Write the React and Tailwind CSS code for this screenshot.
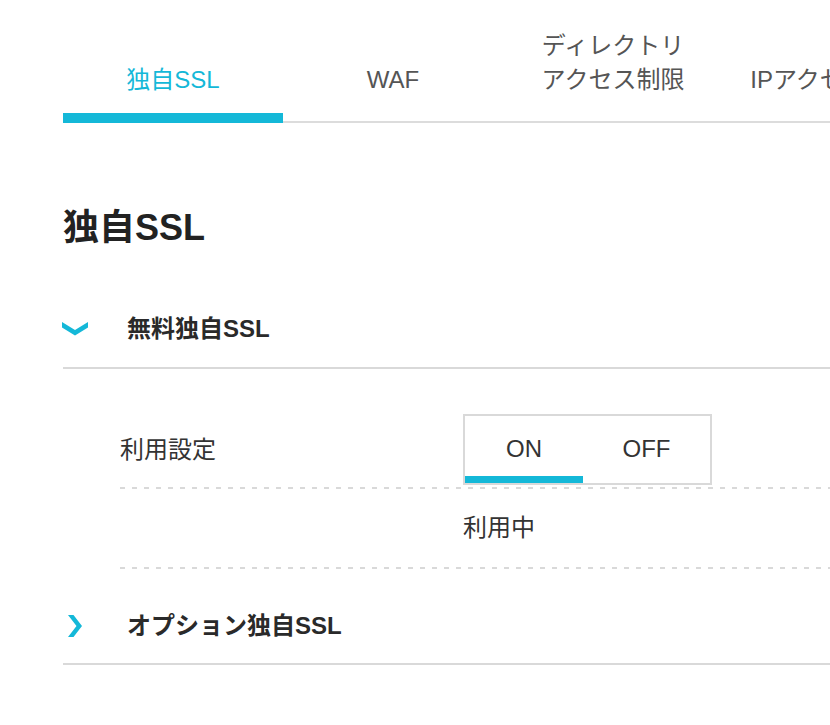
import React, { useState } from "react";

const tabs = [
  { key: "ssl", lines: ["独自SSL"] },
  { key: "waf", lines: ["WAF"] },
  { key: "dir", lines: ["ディレクトリ", "アクセス制限"] },
  { key: "ip", lines: ["IPアクセス制限"] },
];

const ChevronDown = () => (
  <svg width="26" height="14" viewBox="0 0 26 14" className="-ml-px">
    <polygon points="0,0 13,8 26,0 26,5.5 13,13.5 0,5.5" fill="#14b8d8" />
  </svg>
);

const ChevronRight = () => (
  <svg width="14" height="22" viewBox="0 0 14 22" className="ml-[5px]">
    <polygon points="0,0 5.5,0 14,11 5.5,22 0,22 8.5,11" fill="#14b8d8" />
  </svg>
);

const Dotted = () => (
  <div className="h-[2px] bg-[linear-gradient(to_right,#d9d9d9_0px,#d9d9d9_5px,transparent_5px,transparent_12px)] bg-[length:12px_2px] bg-repeat-x" />
);

const App = () => {
  const [activeTab, setActiveTab] = useState("ssl");
  const [freeOpen, setFreeOpen] = useState(true);
  const [optionOpen, setOptionOpen] = useState(false);
  const [sslOn, setSslOn] = useState(true);

  return (
    <div className="w-full min-h-screen overflow-hidden bg-white pl-[63px] pt-[29px] font-['Liberation_Sans','Noto_Sans_CJK_JP',sans-serif]">
      {/* タブ */}
      <div className="flex items-end border-b-2 border-[#dcdcdc]">
        {tabs.map((tab) => (
          <button
            key={tab.key}
            onClick={() => setActiveTab(tab.key)}
            className={
              activeTab === tab.key
                ? "w-[220px] shrink-0 -mb-[2px] pb-4 border-b-[10px] border-[#14b8d8] text-center text-[24px] leading-[34px] text-[#14b8d8]"
                : "w-[220px] shrink-0 -mb-[2px] pb-4 border-b-[10px] border-transparent text-center text-[24px] leading-[34px] text-[#555]"
            }
          >
            {tab.lines.map((l) => (
              <div key={l} className="whitespace-nowrap">{l}</div>
            ))}
          </button>
        ))}
      </div>

      <h2 className="mt-[80px] text-[36px] leading-[50px] font-bold text-[#222]">独自SSL</h2>

      {/* 無料独自SSL */}
      <button
        onClick={() => setFreeOpen(!freeOpen)}
        className="mt-[37px] w-full h-[79px] flex items-center border-b-2 border-[#d9d9d9] text-left"
      >
        <div className="w-[64px] flex items-center">
          {freeOpen ? <ChevronDown /> : <ChevronRight />}
        </div>
        <span className="text-[24px] font-bold text-[#2a2a2a]">無料独自SSL</span>
      </button>

      {freeOpen && (
        <div className="ml-[57px]">
          <div className="flex items-center pt-[45px] pb-[2px]">
            <div className="w-[343px] text-[24px] leading-[34px] text-[#333]">利用設定</div>
            <div className="flex h-[71px] border-2 border-[#d9d9d9]">
              <button
                onClick={() => setSslOn(true)}
                className={
                  sslOn
                    ? "w-[118px] flex items-center justify-center pt-[5px] border-b-[7px] border-[#14b8d8] text-[24px] text-[#333]"
                    : "w-[118px] flex items-center justify-center pt-[5px] border-b-[7px] border-transparent text-[24px] text-[#333]"
                }
              >
                ON
              </button>
              <button
                onClick={() => setSslOn(false)}
                className={
                  !sslOn
                    ? "w-[127px] flex items-center justify-center pt-[5px] border-b-[7px] border-[#14b8d8] text-[24px] text-[#333]"
                    : "w-[127px] flex items-center justify-center pt-[5px] border-b-[7px] border-transparent text-[24px] text-[#333]"
                }
              >
                OFF
              </button>
            </div>
          </div>
          <Dotted />
          <div className="h-[78px] flex items-center pl-[343px] text-[24px] text-[#333]">
            {sslOn ? "利用中" : "停止中"}
          </div>
          <Dotted />
        </div>
      )}

      {/* オプション独自SSL */}
      <button
        onClick={() => setOptionOpen(!optionOpen)}
        className="mt-[20px] w-full h-[76px] flex items-center border-b-2 border-[#d9d9d9] text-left"
      >
        <div className="w-[64px] flex items-center">
          {optionOpen ? <ChevronDown /> : <ChevronRight />}
        </div>
        <span className="text-[24px] font-bold text-[#2a2a2a]">オプション独自SSL</span>
      </button>
    </div>
  );
};

export default App;
